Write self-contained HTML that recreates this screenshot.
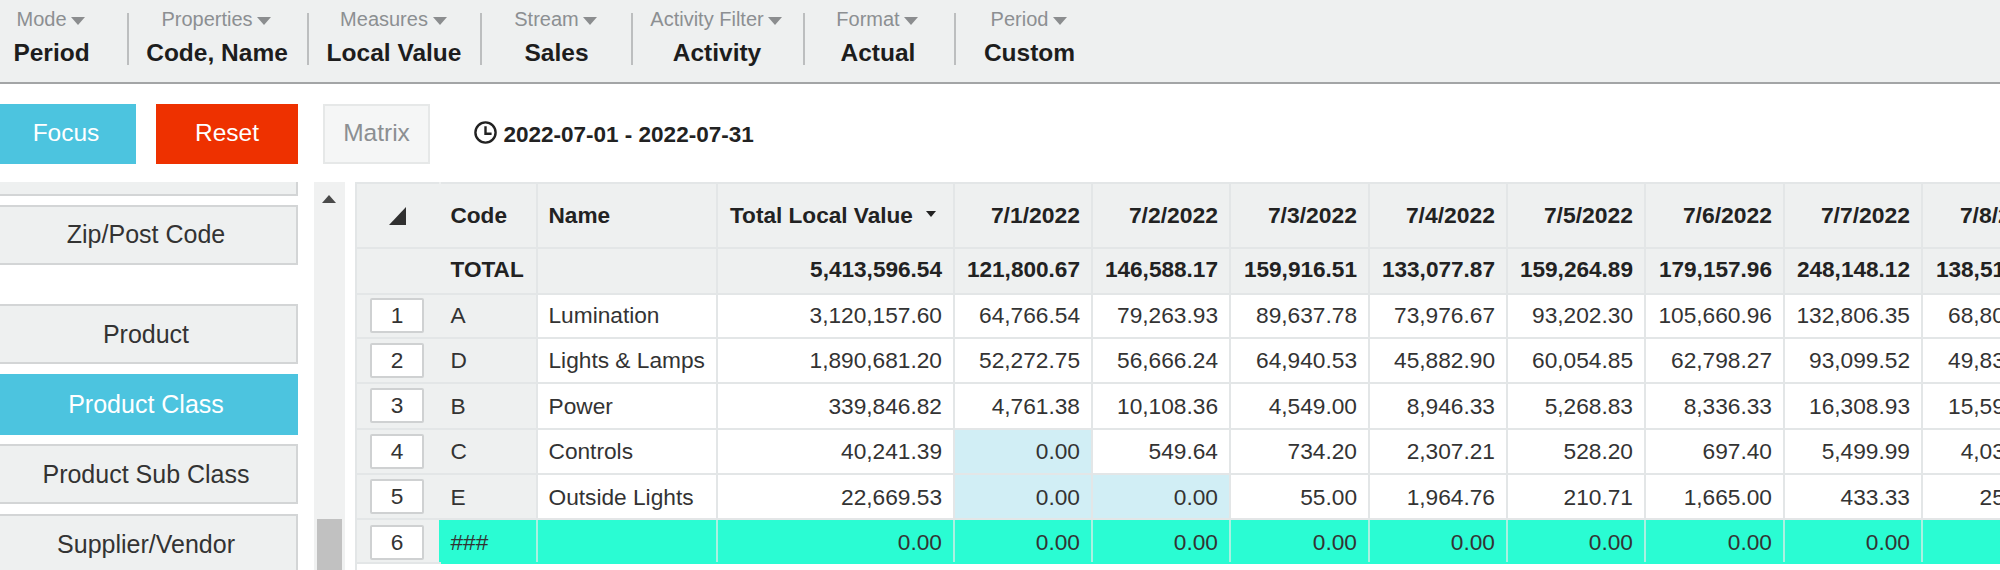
<!DOCTYPE html>
<html><head><meta charset="utf-8"><title>Matrix</title>
<style>
html,body{margin:0;padding:0;}
body{width:2000px;height:570px;overflow:hidden;background:#fff;position:relative;font-family:"Liberation Sans",sans-serif;color:#222;}
.abs{position:absolute;}
#toolbar{position:absolute;left:0;top:0;width:2000px;height:82px;background:#eef0f0;border-bottom:2px solid #a3a5a6;}
.tbi{position:absolute;top:0;width:300px;margin-left:-150px;text-align:center;white-space:nowrap;}
.tbi .l{position:absolute;left:0;right:0;top:7px;font-size:20px;line-height:24px;color:#8c8f92;}
.tbi .v{position:absolute;left:0;right:0;top:39px;font-size:24.5px;line-height:28px;font-weight:bold;color:#1d1d1d;}
.caret{display:inline-block;width:0;height:0;border-left:7px solid transparent;border-right:7px solid transparent;border-top:8px solid #8b8d8f;margin-left:4.6px;margin-right:1.4px;vertical-align:1.2px;}
.sep{position:absolute;top:13px;height:52px;width:2px;background:#bcbebf;}
.btn{position:absolute;top:104px;height:60px;line-height:58px;font-size:24.5px;text-align:center;color:#fff;box-sizing:border-box;}
.side{position:absolute;left:-2px;width:300px;height:60px;box-sizing:border-box;border:2px solid #d3d5d6;background:#eef0f0;font-size:25px;line-height:54px;text-align:center;color:#333;}
.side span{display:inline-block;margin-left:-4px;position:relative}
table{border-collapse:collapse;position:absolute;left:355px;top:182px;table-layout:fixed;font-size:22.7px;}
td,th{padding:0 11px 0 0;border:2px solid #e3e6e7;white-space:nowrap;overflow:hidden;box-sizing:border-box;}
th{background:#eef0f0;font-weight:bold;font-size:22.6px;text-align:right;color:#222;}
td{text-align:right;color:#333;background:#fff;}
.g{background:#eef0f0;}
.lft{text-align:left;}
.c2{padding-left:9.5px;}
.c3{padding-left:10.5px;}
.c4{padding-right:11px;}
.b{font-weight:bold;color:#222;}
.lb{background:#d1eef5;}
.aq td.q{background:#2afcd3;border-top-color:#2afcd3;border-bottom-color:#2afcd3;border-left-color:#a9f1e1;border-right-color:#a9f1e1;}
.num{position:absolute;left:14px;width:54px;height:35px;line-height:31px;box-sizing:border-box;border:2px solid #cfd1d2;border-radius:2px;background:#fff;text-align:center;font-size:22.7px;color:#333;vertical-align:middle;}
tr:nth-child(1) th:nth-child(n+5){font-size:22.9px}
tr:nth-child(2)>*{padding-bottom:3.0px;}
tr:nth-child(3)>*{padding-bottom:2px;}
tr:nth-child(7)>*{padding-top:1.0px;}
tr:nth-child(8)>*{padding-top:2px;}
</style></head><body>
<div id="toolbar">
<div class="tbi" style="left:51.5px"><div class="l">Mode<i class="caret"></i></div><div class="v">Period</div></div>
<div class="tbi" style="left:217px"><div class="l">Properties<i class="caret"></i></div><div class="v">Code, Name</div></div>
<div class="tbi" style="left:394px"><div class="l">Measures<i class="caret"></i></div><div class="v">Local Value</div></div>
<div class="tbi" style="left:556.5px"><div class="l">Stream<i class="caret"></i></div><div class="v">Sales</div></div>
<div class="tbi" style="left:717px"><div class="l">Activity Filter<i class="caret"></i></div><div class="v">Activity</div></div>
<div class="tbi" style="left:878px"><div class="l">Format<i class="caret"></i></div><div class="v">Actual</div></div>
<div class="tbi" style="left:1029.5px"><div class="l">Period<i class="caret"></i></div><div class="v">Custom</div></div>
<div class="sep" style="left:127px"></div>
<div class="sep" style="left:307px"></div>
<div class="sep" style="left:480px"></div>
<div class="sep" style="left:631px"></div>
<div class="sep" style="left:803px"></div>
<div class="sep" style="left:954px"></div>
</div>
<div class="side" style="top:136px;"></div>
<div class="side" style="top:205px;"><span style="top:0px">Zip/Post Code</span></div>
<div class="side" style="top:304px;"><span style="top:1px">Product</span></div>
<div class="side" style="top:374px;background:#4cc4df;border-color:#4cc4df;color:#fff;height:61px;"><span style="top:1px">Product Class</span></div>
<div class="side" style="top:444px;"><span style="top:1px">Product Sub Class</span></div>
<div class="side" style="top:514px;"><span style="top:1px">Supplier/Vendor</span></div>
<div class="abs" style="left:0;top:100px;width:312px;height:82px;background:#fff"></div>
<div class="btn" style="left:0;width:136px;background:#4cc4df;padding-right:4px;">Focus</div>
<div class="btn" style="left:156px;width:142px;background:#ee3100;">Reset</div>
<div class="btn" style="left:323px;width:107px;line-height:54px;border:2px solid #e6e8e8;background:#f5f6f6;color:#8c8f92;">Matrix</div>
<svg class="abs" style="left:472.7px;top:120.1px" width="25" height="25" viewBox="0 0 25 25"><circle cx="12.5" cy="12.5" r="10.1" fill="none" stroke="#222" stroke-width="2.4"/><path d="M12.5 6.3V13.7H18.6" fill="none" stroke="#222" stroke-width="2.4"/></svg>
<div class="abs" style="left:503.5px;top:121px;font-size:22.5px;line-height:28px;font-weight:bold;color:#222;white-space:nowrap">2022-07-01 - 2022-07-31</div>
<div class="abs" style="left:314px;top:182px;width:31px;height:388px;background:#f0f1f1"></div>
<div class="abs" style="left:322px;top:195.3px;width:0;height:0;border-left:7.5px solid transparent;border-right:7.5px solid transparent;border-bottom:8.5px solid #4a4a4a"></div>
<div class="abs" style="left:317px;top:519px;width:25px;height:60px;background:#c1c1c1"></div>
<table style="width:1705px"><colgroup><col style="width:84px"><col style="width:97px"><col style="width:180px"><col style="width:237px"><col style="width:138px"><col style="width:138px"><col style="width:139px"><col style="width:138px"><col style="width:138px"><col style="width:139px"><col style="width:138px"><col style="width:139px"></colgroup>
<tr style="height:65px"><th class="g" style="border-right-color:#eef0f0"><svg width="17" height="18" viewBox="0 0 17 18" style="position:relative;left:-21.7px;top:2.7px"><path d="M17 0V18H0Z" fill="#303030"/></svg></th><th class="lft c2" style="border-left-color:#eef0f0">Code</th><th class="lft c3">Name</th><th class="lft" style="padding-left:12px">Total Local Value<i class="caret" style="border-width:6.5px 5.8px 0 5.8px;border-top-color:#222;margin-left:13px;margin-right:0;vertical-align:5.5px"></i></th><th>7/1/2022</th><th>7/2/2022</th><th>7/3/2022</th><th>7/4/2022</th><th>7/5/2022</th><th>7/6/2022</th><th>7/7/2022</th><th>7/8/2022</th></tr>
<tr style="height:46px"><th style="border-right-color:#eef0f0"></th><th class="lft c2" style="border-left-color:#eef0f0">TOTAL</th><th></th><th class="c4">5,413,596.54</th><th class="">121,800.67</th><th class="">146,588.17</th><th class="">159,916.51</th><th class="">133,077.87</th><th class="">159,264.89</th><th class="">179,157.96</th><th class="">248,148.12</th><th class="">138,512.46</th></tr>
<tr class="" style="height:44px"><td class="g" style="padding:0;text-align:center;border-right-color:#eef0f0"><span class="num" style="top:115px">1</span></td><td class="g lft c2" style="border-left-color:#eef0f0">A</td><td class="lft c3">Lumination</td><td class=" c4">3,120,157.60</td><td class="">64,766.54</td><td class="">79,263.93</td><td class="">89,637.78</td><td class="">73,976.67</td><td class="">93,202.30</td><td class="">105,660.96</td><td class="">132,806.35</td><td class="">68,804.12</td></tr>
<tr class="" style="height:45px"><td class="g" style="padding:0;text-align:center;border-right-color:#eef0f0"><span class="num" style="top:160px">2</span></td><td class="g lft c2" style="border-left-color:#eef0f0">D</td><td class="lft c3">Lights &amp; Lamps</td><td class=" c4">1,890,681.20</td><td class="">52,272.75</td><td class="">56,666.24</td><td class="">64,940.53</td><td class="">45,882.90</td><td class="">60,054.85</td><td class="">62,798.27</td><td class="">93,099.52</td><td class="">49,832.50</td></tr>
<tr class="" style="height:46px"><td class="g" style="padding:0;text-align:center;border-right-color:#eef0f0"><span class="num" style="top:205px">3</span></td><td class="g lft c2" style="border-left-color:#eef0f0">B</td><td class="lft c3">Power</td><td class=" c4">339,846.82</td><td class="">4,761.38</td><td class="">10,108.36</td><td class="">4,549.00</td><td class="">8,946.33</td><td class="">5,268.83</td><td class="">8,336.33</td><td class="">16,308.93</td><td class="">15,594.20</td></tr>
<tr class="" style="height:45px"><td class="g" style="padding:0;text-align:center;border-right-color:#eef0f0"><span class="num" style="top:251px">4</span></td><td class="g lft c2" style="border-left-color:#eef0f0">C</td><td class="lft c3">Controls</td><td class=" c4">40,241.39</td><td class="lb">0.00</td><td class="">549.64</td><td class="">734.20</td><td class="">2,307.21</td><td class="">528.20</td><td class="">697.40</td><td class="">5,499.99</td><td class="">4,031.22</td></tr>
<tr class="" style="height:45px"><td class="g" style="padding:0;text-align:center;border-right-color:#eef0f0"><span class="num" style="top:296px">5</span></td><td class="g lft c2" style="border-left-color:#eef0f0">E</td><td class="lft c3">Outside Lights</td><td class=" c4">22,669.53</td><td class="lb">0.00</td><td class="lb">0.00</td><td class="">55.00</td><td class="">1,964.76</td><td class="">210.71</td><td class="">1,665.00</td><td class="">433.33</td><td class="">254.41</td></tr>
<tr class="aq" style="height:44px"><td class="g" style="padding:0;text-align:center;border-right-color:#2afcd3"><span class="num" style="top:342px">6</span></td><td class="g lft c2 q" style="border-left-color:#2afcd3">###</td><td class="lft c3 q"></td><td class=" q c4">0.00</td><td class=" q">0.00</td><td class=" q">0.00</td><td class=" q">0.00</td><td class=" q">0.00</td><td class=" q">0.00</td><td class=" q">0.00</td><td class=" q">0.00</td><td class=" q"></td></tr>
</table>
<div class="abs" style="left:355px;top:182px;width:2px;height:388px;background:#e3e6e7"></div>
</body></html>
